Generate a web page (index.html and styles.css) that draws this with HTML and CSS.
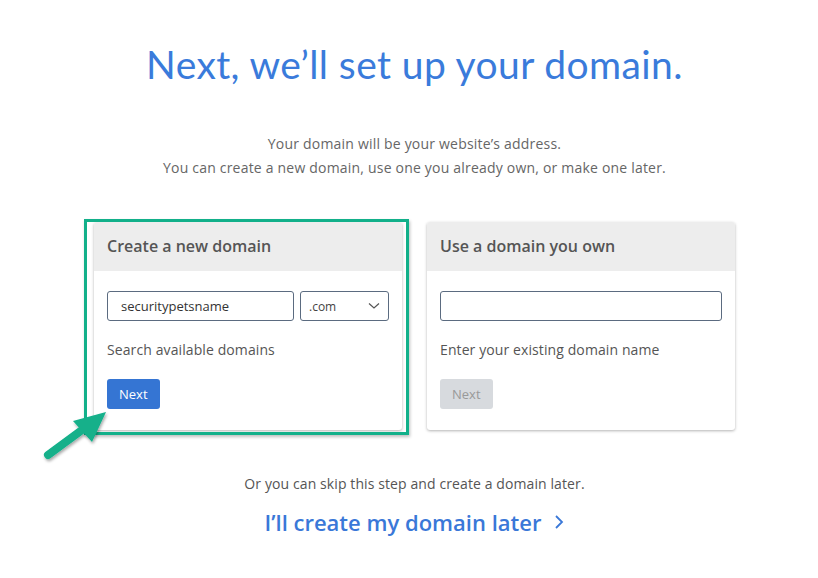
FILE: index.html
```html
<!DOCTYPE html>
<html lang="en">
<head>
    <meta charset="UTF-8">
    <meta name="viewport" content="width=device-width, initial-scale=1.0">
    <title>Domain</title>
    <link rel="stylesheet" href="styles.css">
</head>
<body>
    <div class="page">
        <h1 class="title">Next, we’ll set up your domain.</h1>
        <p class="intro">Your domain will be your website’s address.<br>You can create a new domain, use one you already own, or make one later.</p>

        <div class="cards">
            <div class="card">
                <div class="highlight"></div>
                <div class="card-head">Create a new domain</div>
                <div class="card-body">
                    <div class="field-row">
                        <input type="text" class="field" value="securitypetsname">
                        <div class="select">
                            <span>.com</span>
                            <svg width="12" height="8" viewBox="0 0 12 8"><path d="M1 1.5 L6 6 L11 1.5" fill="none" stroke="#555" stroke-width="1.2"/></svg>
                        </div>
                    </div>
                    <p class="hint">Search available domains</p>
                    <button class="btn">Next</button>
                </div>
            </div>

            <div class="card">
                <div class="card-head">Use a domain you own</div>
                <div class="card-body">
                    <div class="field-row">
                        <input type="text" class="field">
                    </div>
                    <p class="hint">Enter your existing domain name</p>
                    <button class="btn btn-disabled">Next</button>
                </div>
            </div>
        </div>

        <p class="skip">Or you can skip this step and create a domain later.</p>
        <a class="later" href="#">I’ll create my domain later
            <svg width="10" height="16" viewBox="0 0 10 16"><path d="M2 2 L8 8 L2 14" fill="none" stroke="#3a78d8" stroke-width="1.8"/></svg>
        </a>
    </div>

    <!-- annotation arrow -->
    <svg class="arrow" width="80" height="64" viewBox="0 0 80 64">
        <defs>
            <filter id="sh" x="-20%" y="-20%" width="150%" height="150%">
                <feDropShadow dx="1" dy="2" stdDeviation="1.5" flood-color="#000" flood-opacity="0.35"/>
            </filter>
        </defs>
        <g filter="url(#sh)">
            <line x1="10" y1="51" x2="48" y2="23" stroke="#12b08a" stroke-width="8" stroke-linecap="round"/>
            <polygon points="68,8 35,17 54,38" fill="#12b08a"/>
        </g>
    </svg>
</body>
</html>
```

FILE: styles.css
```css
body {
    margin: 0;
    font-family: 'Open Sans', 'Liberation Sans', sans-serif;
    background: #ffffff;
    color: #555;
    position: relative;
}

.page {
    padding-left: 11px;
    text-align: center;
}

.title {
    font-family: Lato, 'Open Sans', sans-serif;
    font-weight: 400;
    font-size: 39px;
    line-height: 46px;
    color: #3a7bdb;
    margin: 41px 0 0;
    letter-spacing: 0.4px;
}

.intro {
    font-size: 14px;
    line-height: 24px;
    color: #666;
    margin: 45px 0 0;
    letter-spacing: 0.2px;
}

.cards {
    display: flex;
    justify-content: center;
    gap: 25px;
    margin-top: 42px;
    text-align: left;
}

.card {
    width: 308px;
    background: #fff;
    border-radius: 3px;
    box-shadow: 0 1px 3px rgba(0, 0, 0, 0.3);
    position: relative;
}

/* green annotation frame */
.highlight {
    position: absolute;
    top: -3px;
    left: -10px;
    right: -7px;
    bottom: -5px;
    border: 3px solid #12b08a;
    box-shadow: 1px 2px 3px rgba(0, 0, 0, 0.25);
    pointer-events: none;
}

.card-head {
    background: #ededed;
    height: 49px;
    line-height: 48px;
    padding: 0 13px;
    font-size: 16px;
    font-weight: 600;
    color: #555;
    border-radius: 3px 3px 0 0;
}

.card-body {
    padding: 20px 13px 21px 13px;
}

.field-row {
    display: flex;
    gap: 6px;
}

.field {
    flex: 1;
    min-width: 0;
    height: 30px;
    box-sizing: border-box;
    border: 1px solid #5b6b80;
    border-radius: 3px;
    padding: 0 13px;
    font-family: 'Open Sans', sans-serif;
    font-size: 13px;
    color: #333;
    outline: none;
}

.select {
    width: 89px;
    height: 30px;
    box-sizing: border-box;
    border: 1px solid #5b6b80;
    border-radius: 3px;
    display: flex;
    align-items: center;
    justify-content: space-between;
    padding: 0 8px 0 8px;
    font-size: 12px;
    color: #444;
}

.hint {
    font-size: 14px;
    line-height: 20px;
    margin: 19px 0 19px;
    color: #555;
    letter-spacing: 0.1px;
}

.btn {
    display: block;
    height: 30px;
    padding: 0 12px;
    border: none;
    border-radius: 3px;
    background: #3575d3;
    color: #fff;
    font-family: 'Open Sans', sans-serif;
    font-size: 13px;
}

.btn-disabled {
    background: #d7dade;
    color: #999;
}

.skip {
    font-size: 14px;
    color: #555;
    margin: 44px 0 0;
    line-height: 20px;
    letter-spacing: 0.1px;
}

.later {
    display: inline-flex;
    align-items: center;
    gap: 13px;
    margin-top: 13px;
    font-size: 22px;
    font-weight: 600;
    color: #3a78d8;
    text-decoration: none;
}

.arrow {
    position: absolute;
    left: 38px;
    top: 404px;
}
```
